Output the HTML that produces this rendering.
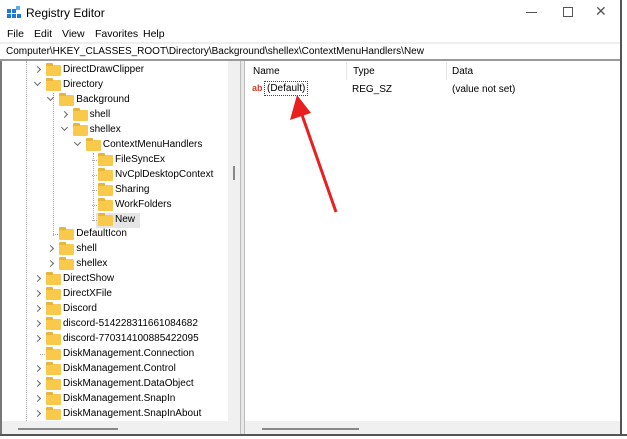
<!DOCTYPE html><html><head><style>
*{margin:0;padding:0;box-sizing:border-box}
body{width:627px;height:439px;overflow:hidden;background:#fff;font-family:"Liberation Sans",sans-serif;font-size:10px;color:#000;position:relative}
.a{position:absolute;white-space:nowrap}
.f{position:absolute;width:15px;height:11px;background:#f8c94a;border-radius:1px}
.f:before{content:"";position:absolute;left:0;top:-2px;width:7px;height:3px;background:#e9b43a;border-radius:1px 1px 0 0}
.ch{position:absolute;width:5px;height:5px;border-right:1px solid #666;border-bottom:1px solid #666}
.r{transform:rotate(-45deg)}.d{transform:rotate(45deg)}
</style></head><body>
<svg class="a" style="left:7px;top:6px" width="14" height="14"><rect x="0" y="3" width="4" height="4" fill="#1e7ad3"/><rect x="5" y="3" width="4" height="4" fill="#1e7ad3"/><rect x="0" y="8" width="4" height="4" fill="#1e7ad3"/><rect x="5" y="8" width="4" height="4" fill="#1e7ad3"/><rect x="10" y="8" width="4" height="4" fill="#1e7ad3"/><rect x="9" y="0" width="4" height="4" fill="#5aaef0"/></svg>
<div class="a" style="left:26px;top:6px;font-size:12px">Registry Editor</div>
<div class="a" style="left:526px;top:12px;width:11px;height:1px;background:#555"></div>
<div class="a" style="left:563px;top:7px;width:10px;height:10px;border:1px solid #555"></div>
<div class="a" style="left:595px;top:3px;font-size:14px;color:#555">✕</div>
<div class="a" style="left:7px;top:28px;font-size:10.5px">File</div>
<div class="a" style="left:34px;top:28px;font-size:10.5px">Edit</div>
<div class="a" style="left:62px;top:28px;font-size:10.5px">View</div>
<div class="a" style="left:95px;top:28px;font-size:10.5px">Favorites</div>
<div class="a" style="left:143px;top:28px;font-size:10.5px">Help</div>
<div class="a" style="left:0;top:42px;width:627px;height:2px;background:#eee"></div>
<div class="a" style="left:6px;top:46px">Computer\HKEY_CLASSES_ROOT\Directory\Background\shellex\ContextMenuHandlers\New</div>
<div class="a" style="left:0;top:59px;width:627px;height:2px;background:#999"></div>
<div class="a" style="left:0;top:61px;width:2px;height:378px;background:#777"></div>
<div class="a" style="left:228px;top:61px;width:12px;height:360px;background:#f0f0f0"></div>
<div class="a" style="left:233px;top:166px;width:2px;height:14px;background:#888"></div>
<div class="a" style="left:240px;top:61px;width:5px;height:378px;background:#e8e8e8;border-left:1px solid #bbb;border-right:1px solid #bbb"></div>
<div class="a" style="left:2px;top:421px;width:238px;height:13px;background:#f0f0f0"></div>
<div class="a" style="left:18px;top:428px;width:100px;height:2px;background:#888"></div>
<div class="a" style="left:245px;top:421px;width:376px;height:13px;background:#f0f0f0"></div>
<div class="a" style="left:262px;top:428px;width:97px;height:2px;background:#888"></div>
<div class="a" style="left:620px;top:0;width:7px;height:439px;background:#fff;border-left:2px solid #555"></div>
<div class="a" style="left:0;top:434px;width:627px;height:5px;background:#fff;border-top:2px solid #555"></div>
<div class="a" style="left:26px;top:61px;width:0;height:360px;border-left:1px dotted #aaa"></div>
<div class="a" style="left:53px;top:93px;width:0;height:143px;border-left:1px dotted #aaa"></div>
<div class="a" style="left:93px;top:153px;width:0;height:68px;border-left:1px dotted #aaa"></div>
<div class="a" style="left:96px;top:213px;width:44px;height:15px;background:#e5e5e5"></div>
<div id="t"></div>
<script>
var rows=[[0,1,"DirectDrawClipper"],[0,2,"Directory"],[1,2,"Background"],[2,1,"shell"],[2,2,"shellex"],[3,2,"ContextMenuHandlers"],[4,0,"FileSyncEx"],[4,0,"NvCplDesktopContext"],[4,0,"Sharing"],[4,0,"WorkFolders"],[4,0,"New"],[1,0,"DefaultIcon"],[1,1,"shell"],[1,1,"shellex"],[0,1,"DirectShow"],[0,1,"DirectXFile"],[0,1,"Discord"],[0,1,"discord-514228311661084682"],[0,1,"discord-770314100885422095"],[0,0,"DiskManagement.Connection"],[0,1,"DiskManagement.Control"],[0,1,"DiskManagement.DataObject"],[0,1,"DiskManagement.SnapIn"],[0,1,"DiskManagement.SnapInAbout"]];
var h="";rows.forEach(function(r,i){var y=64+i*14.95,x=46+r[0]*13.3;if(r[0]==4)x=98;
if(r[1]==1)h+='<div class="ch r" style="left:'+(x-11)+'px;top:'+(y+3)+'px"></div>';
if(r[1]==2)h+='<div class="ch d" style="left:'+(x-11)+'px;top:'+(y+1)+'px"></div>';
if(r[1]==0)h+='<div class="a" style="left:'+(x-6)+'px;top:'+(y+6)+'px;width:5px;border-top:1px dotted #aaa"></div>';
h+='<div class="f" style="left:'+x+'px;top:'+(y+1)+'px"></div><div class="a" style="left:'+(x+17)+'px;top:'+y+'px">'+r[2]+'</div>';});
document.getElementById("t").innerHTML=h;
</script>
<div class="a" style="left:253px;top:66px">Name</div>
<div class="a" style="left:346px;top:62px;height:18px;border-left:1px solid #e5e5e5"></div>
<div class="a" style="left:353px;top:66px">Type</div>
<div class="a" style="left:446px;top:62px;height:18px;border-left:1px solid #e5e5e5"></div>
<div class="a" style="left:452px;top:66px">Data</div>
<div class="a" style="left:252px;top:83px;font-size:9px;font-weight:bold;color:#d04030">ab</div>
<div class="a" style="left:264px;top:81px;border:1px dotted #444;padding:1px 2px">(Default)</div>
<div class="a" style="left:352px;top:84px">REG_SZ</div>
<div class="a" style="left:452px;top:84px">(value not set)</div>
<svg class="a" style="left:280px;top:90px" width="70" height="130"><line x1="56" y1="122" x2="21" y2="22" stroke="#e82020" stroke-width="3"/><polygon points="17,5 10,30 31,23" fill="#e82020"/></svg>
</body></html>
